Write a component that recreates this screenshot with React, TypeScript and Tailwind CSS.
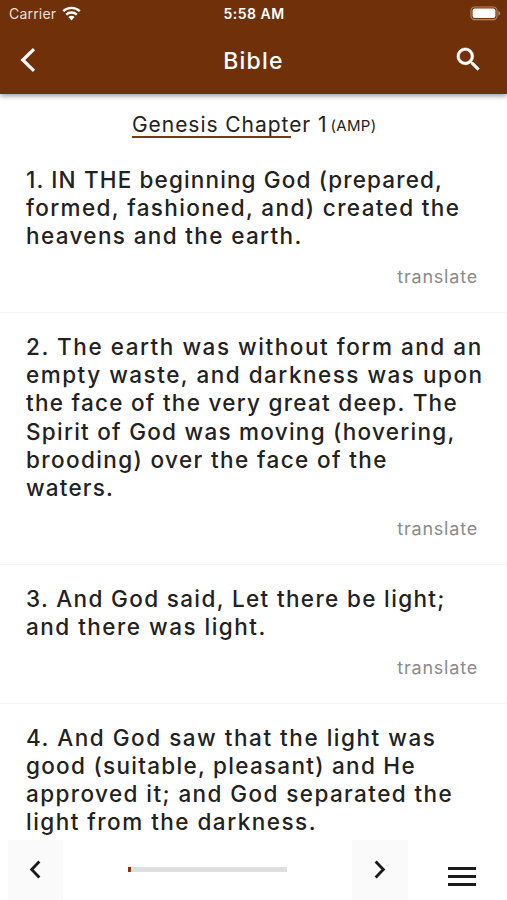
import React, { useState } from "react";

type Line = { text: string; tracking: string };
type Verse = { id: number; lines: Line[] };

const verses: Verse[] = [
  {
    id: 1,
    lines: [
      { text: "1. IN THE beginning God (prepared,", tracking: "tracking-[1.14px]" },
      { text: "formed, fashioned, and) created the", tracking: "tracking-[1.37px]" },
      { text: "heavens and the earth.", tracking: "tracking-[1.36px]" },
    ],
  },
  {
    id: 2,
    lines: [
      { text: "2. The earth was without form and an", tracking: "tracking-[1.54px]" },
      { text: "empty waste, and darkness was upon", tracking: "tracking-[1.5px]" },
      { text: "the face of the very great deep. The", tracking: "tracking-[1.27px]" },
      { text: "Spirit of God was moving (hovering,", tracking: "tracking-[1.26px]" },
      { text: "brooding) over the face of the", tracking: "tracking-[1.38px]" },
      { text: "waters.", tracking: "tracking-[1.2px]" },
    ],
  },
  {
    id: 3,
    lines: [
      { text: "3. And God said, Let there be light;", tracking: "tracking-[1.35px]" },
      { text: "and there was light.", tracking: "tracking-[1.49px]" },
    ],
  },
  {
    id: 4,
    lines: [
      { text: "4. And God saw that the light was", tracking: "tracking-[1.53px]" },
      { text: "good (suitable, pleasant) and He", tracking: "tracking-[1.28px]" },
      { text: "approved it; and God separated the", tracking: "tracking-[1.41px]" },
      { text: "light from the darkness.", tracking: "tracking-[1.48px]" },
    ],
  },
];

function StatusBar() {
  return (
    <div className="grid h-7 grid-cols-3 items-center pb-[2px] pl-[9px] pr-[6px] text-white">
      <div className="flex items-center gap-[6px] text-[14px] tracking-[0.2px] text-[#f1dfd2]">
        <span>Carrier</span>
        <svg width="19" height="15" viewBox="0 0 19 15" fill="none" stroke="#fff" strokeWidth="2.4">
          <path d="M1.2 5.2a12 12 0 0 1 16.6 0" />
          <path d="M4.2 8.7a7.6 7.6 0 0 1 10.6 0" />
          <path d="M9.5 14.4 6.4 11.1a4.5 4.5 0 0 1 6.2 0Z" fill="#fff" stroke="none" />
        </svg>
      </div>
      <span className="pr-[2px] text-center text-[14px] font-semibold tracking-[0.5px]">5:58 AM</span>
      <svg className="justify-self-end" width="31" height="15" viewBox="0 0 31 15">
        <rect x="1" y="1" width="26" height="12.6" rx="3.6" fill="none" stroke="#b08a6c" strokeWidth="1.1" />
        <rect x="2.6" y="2.6" width="22.8" height="9.4" rx="2" fill="#fff" />
        <path d="M28.4 5v4.6c1.1-.4 1.8-1.2 1.8-2.3S29.5 5.4 28.4 5Z" fill="#b08a6c" />
      </svg>
    </div>
  );
}

function Header() {
  return (
    <header className="relative bg-[#70310a] shadow-[0_2px_5px_rgba(0,0,0,0.4)]">
      <StatusBar />
      <div className="grid h-[66px] grid-cols-3 items-center pb-[3px] pl-[20px] pr-[23px] text-white">
        <button aria-label="Back" className="w-4">
          <svg width="16" height="26" viewBox="0 0 16 26" fill="none" stroke="#fff" strokeWidth="3.2">
            <path d="M14 2.2 2.8 13 14 23.8" />
          </svg>
        </button>
        <h1 className="pl-[3px] pt-[3px] text-center text-[23px] font-medium tracking-[1.2px]">Bible</h1>
        <button aria-label="Search" className="justify-self-end">
          <svg width="31" height="31" viewBox="0 0 24 24" fill="#fff" stroke="#fff" strokeWidth="0.4">
            <path d="M15.5 14h-.79l-.28-.27A6.471 6.471 0 0 0 16 9.5 6.5 6.5 0 1 0 9.5 16c1.61 0 3.09-.59 4.23-1.57l.27.28v.79l5 4.99L20.49 19l-4.99-5zm-6 0C7.01 14 5 11.99 5 9.5S7.01 5 9.5 5 14 7.01 14 9.5 11.99 14 9.5 14z" />
          </svg>
        </button>
      </div>
    </header>
  );
}

function VerseItem({ verse, last }: { verse: Verse; last: boolean }) {
  return (
    <article className={last ? "px-[26px] pt-[20px]" : "border-b border-[#f3f3f3] px-[26px] pt-[20px]"}>
      <p className="text-[22.5px] leading-[28.15px] font-[450]">
        {verse.lines.map((line) => (
          <span key={line.text} className={`block whitespace-nowrap ${line.tracking}`}>
            {line.text}
          </span>
        ))}
      </p>
      {!last && (
        <div className="flex h-[61.7px] items-start justify-end pr-[3px] pt-[15px]">
          <button className="text-[18px] leading-6 tracking-[0.8px] text-[#8b8b8b]">translate</button>
        </div>
      )}
    </article>
  );
}

function Footer({ progress }: { progress: number }) {
  return (
    <footer className="flex h-[60px] shrink-0 bg-white pl-2">
      <button aria-label="Previous chapter" className="flex w-[55px] items-start justify-center bg-[#fafafa] pt-[20px] pr-[2px]">
        <svg width="12" height="19" viewBox="0 0 12 20" fill="none" stroke="#1b1b1b" strokeWidth="3">
          <path d="M10.6 1.6 2.5 10l8.1 8.4" />
        </svg>
      </button>
      <div className="ml-[65px] mt-[27px] h-[5px] w-[159px] bg-[#dfdfdf]">
        <div className="h-full bg-[#8a3208]" style={{ width: `${progress}%` }} />
      </div>
      <button aria-label="Next chapter" className="ml-[65px] flex w-[56px] items-start justify-center bg-[#fafafa] pt-[20px]">
        <svg width="12" height="19" viewBox="0 0 12 20" fill="none" stroke="#1b1b1b" strokeWidth="3">
          <path d="M1.4 1.6 9.5 10l-8.1 8.4" />
        </svg>
      </button>
      <button aria-label="Menu" className="ml-[40px] mt-[27px] flex h-[19px] flex-col justify-between">
        <span className="h-[3px] w-[28px] bg-[#1b1b1b]" />
        <span className="h-[3px] w-[28px] bg-[#1b1b1b]" />
        <span className="h-[3px] w-[28px] bg-[#1b1b1b]" />
      </button>
    </footer>
  );
}

export default function App() {
  const [progress] = useState(2);

  return (
    <div className="flex h-[900px] w-[507px] flex-col overflow-hidden bg-white font-['Inter',sans-serif] text-[#222222]">
      <Header />
      <main className="min-h-0 flex-1 overflow-hidden">
        <div className="ml-[132px] flex h-[52px] items-start pt-[16px]">
          <h2 className="relative text-[21px] leading-[30px] tracking-[0.95px] whitespace-nowrap">
            Genesis Chapter 1
            <span className="absolute left-0 top-[26px] h-[2px] w-[159px] bg-[#7a3a12]" />
          </h2>
          <span className="ml-[3px] mt-[1px] text-[15px] leading-[30px] tracking-[0.3px]">(AMP)</span>
        </div>
        <div>
          {verses.map((verse, i) => (
            <VerseItem key={verse.id} verse={verse} last={i === verses.length - 1} />
          ))}
        </div>
      </main>
      <Footer progress={progress} />
    </div>
  );
}
